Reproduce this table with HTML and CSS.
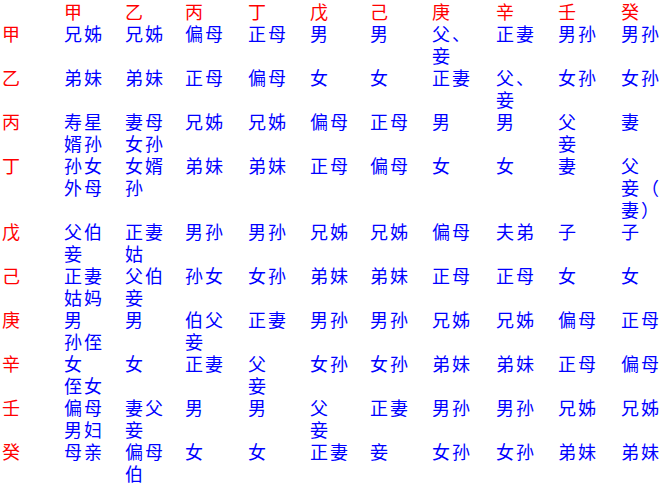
FILE: index.html
```html
<!DOCTYPE html>
<html lang="zh-CN">
<head>
<meta charset="utf-8">
<title>十神六亲表</title>
<link rel="stylesheet" href="styles.css">
</head>
<body>
<table class="chart">
  <colgroup>
    <col class="c-head"><col class="c-1"><col class="c-2"><col class="c-3"><col class="c-4"><col class="c-5"><col class="c-6"><col class="c-7"><col class="c-8"><col class="c-9"><col class="c-10">
  </colgroup>
  <thead>
    <tr class="stems">
      <th></th><th>甲</th><th>乙</th><th>丙</th><th>丁</th><th>戊</th><th>己</th><th>庚</th><th>辛</th><th>壬</th><th>癸</th>
    </tr>
  </thead>
  <tbody>
    <tr><th>甲</th><td>兄姊</td><td>兄姊</td><td>偏母</td><td>正母</td><td>男</td><td>男</td><td>父、<br>妾</td><td>正妻</td><td>男孙</td><td>男孙</td></tr>
    <tr><th>乙</th><td>弟妹</td><td>弟妹</td><td>正母</td><td>偏母</td><td>女</td><td>女</td><td>正妻</td><td>父、<br>妾</td><td>女孙</td><td>女孙</td></tr>
    <tr><th>丙</th><td>寿星<br>婿孙</td><td>妻母<br>女孙</td><td>兄姊</td><td>兄姊</td><td>偏母</td><td>正母</td><td>男</td><td>男</td><td>父<br>妾</td><td>妻</td></tr>
    <tr><th>丁</th><td>孙女<br>外母</td><td>女婿<br>孙</td><td>弟妹</td><td>弟妹</td><td>正母</td><td>偏母</td><td>女</td><td>女</td><td>妻</td><td>父<br>妾（<br>妻）</td></tr>
    <tr><th>戊</th><td>父伯<br>妾</td><td>正妻<br>姑</td><td>男孙</td><td>男孙</td><td>兄姊</td><td>兄姊</td><td>偏母</td><td>夫弟</td><td>子</td><td>子</td></tr>
    <tr><th>己</th><td>正妻<br>姑妈</td><td>父伯<br>妾</td><td>孙女</td><td>女孙</td><td>弟妹</td><td>弟妹</td><td>正母</td><td>正母</td><td>女</td><td>女</td></tr>
    <tr><th>庚</th><td>男<br>孙侄</td><td>男</td><td>伯父<br>妾</td><td>正妻</td><td>男孙</td><td>男孙</td><td>兄姊</td><td>兄姊</td><td>偏母</td><td>正母</td></tr>
    <tr><th>辛</th><td>女<br>侄女</td><td>女</td><td>正妻</td><td>父<br>妾</td><td>女孙</td><td>女孙</td><td>弟妹</td><td>弟妹</td><td>正母</td><td>偏母</td></tr>
    <tr><th>壬</th><td>偏母<br>男妇</td><td>妻父<br>妾</td><td>男</td><td>男</td><td>父<br>妾</td><td>正妻</td><td>男孙</td><td>男孙</td><td>兄姊</td><td>兄姊</td></tr>
    <tr><th>癸</th><td>母亲</td><td>偏母<br>伯</td><td>女</td><td>女</td><td>正妻</td><td>妾</td><td>女孙</td><td>女孙</td><td>弟妹</td><td>弟妹</td></tr>
  </tbody>
</table>
</body>
</html>
```
FILE: styles.css
```css
html, body {
  margin: 0;
  padding: 0;
  background: #ffffff;
}

.chart {
  border-collapse: collapse;
  border-spacing: 0;
  table-layout: fixed;
  width: 666px;
  font-family: "Noto Sans CJK SC", "Noto Sans CJK TC", sans-serif;
  font-size: 18px;
  line-height: 22px;
  letter-spacing: 2px;
}

.c-head { width: 62px; }
.c-1 { width: 61px; }
.c-2 { width: 60px; }
.c-3 { width: 63px; }
.c-4 { width: 62px; }
.c-5 { width: 60px; }
.c-6 { width: 62px; }
.c-7 { width: 64px; }
.c-8 { width: 62px; }
.c-9 { width: 63px; }
.c-10 { width: 47px; }

.chart th,
.chart td {
  padding: 0 0 0 2px;
  text-align: left;
  vertical-align: top;
  font-weight: normal;
  white-space: nowrap;
}

.chart th {
  color: #ff0000;
}

.chart td {
  color: #0000ff;
}
```
